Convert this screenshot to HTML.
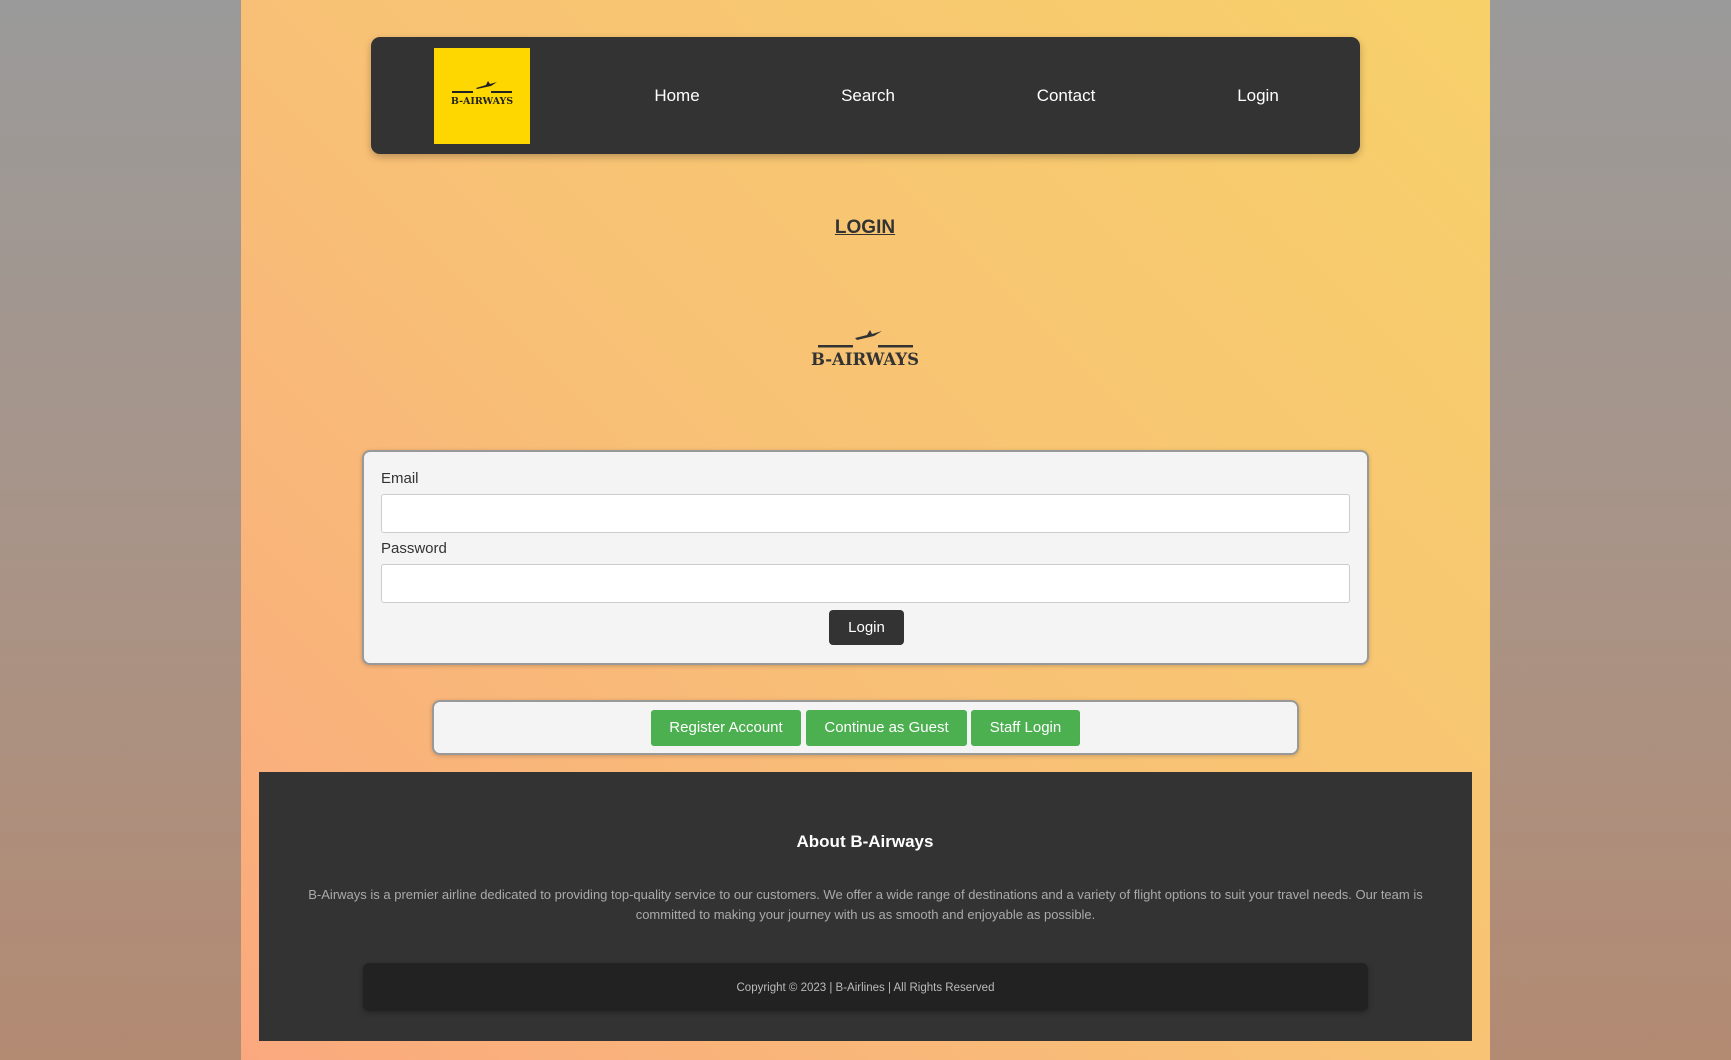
<!DOCTYPE html>
<html><head><meta charset="utf-8"><style>
*{box-sizing:border-box;margin:0;padding:0}
html,body{width:1731px;height:1060px;overflow:hidden;font-family:"Liberation Sans",Arial,sans-serif}
body{background:linear-gradient(180deg,#9a9a9a 0%,#a89488 50%,#b38a72 100%);position:relative}
.wrap{position:absolute;left:241px;top:0;width:1249px;height:1060px;background:linear-gradient(45deg,#faa97e 0%,#f8c275 50%,#f7d06a 100%)}
.abs{position:absolute}
.nav{left:130px;top:37px;width:989px;height:117px;background:#333;border-radius:9px;box-shadow:0 3px 8px rgba(0,0,0,.25)}
.logo{left:63px;top:11px;width:96px;height:96px;background:#ffd700}
.nav a{position:absolute;top:49px;color:#fff;font-size:17px;text-decoration:none;transform:translateX(-50%)}
.c{transform:translateX(-50%);white-space:nowrap}
.box{background:#f4f4f4;border:2px solid #999;border-radius:8px;box-shadow:0 1px 4px rgba(0,0,0,.2)}
label{position:absolute;font-size:15px;color:#333}
.inp{position:absolute;background:#fff;border:1px solid #ccc;border-radius:3px}
.g{position:absolute;top:8px;height:36px;background:#4caf50;color:#fff;font-size:15px;line-height:36px;text-align:center;border-radius:3px}
</style></head><body>
<div class="wrap">
 <div class="abs nav">
  <div class="abs logo">
   <svg width="96" height="96" viewBox="0 0 96 96">
    <path d="M42 40 l10 -3 l2 -4 l2 3 l7 -2 l-6 4 l-14 3z" fill="#222"/>
    <rect x="18" y="43" width="21" height="2" fill="#222"/><rect x="57" y="43" width="21" height="2" fill="#222"/>
    <text x="48" y="56" text-anchor="middle" font-family="DejaVu Serif,serif" font-weight="bold" font-size="9.5" fill="#222">B-AIRWAYS</text>
   </svg>
  </div>
  <a style="left:306px">Home</a><a style="left:497px">Search</a><a style="left:695px">Contact</a><a style="left:887px">Login</a>
 </div>
 <div class="abs c" style="left:624px;top:217px;font-size:19px;font-weight:bold;color:#333;text-decoration:underline">LOGIN</div>
 <div class="abs" style="left:564px;top:324px">
  <svg width="120" height="50" viewBox="0 0 120 50">
   <path d="M50 14 l12 -3 l3 -5 l2 4 l10 -3 l-8 5 l-17 4z" fill="#333"/>
   <rect x="13" y="21" width="35" height="2.5" fill="#333"/><rect x="73" y="21" width="35" height="2.5" fill="#333"/>
   <text x="60" y="41" text-anchor="middle" font-family="DejaVu Serif,serif" font-weight="bold" font-size="16.5" fill="#333">B-AIRWAYS</text>
  </svg>
 </div>
 <div class="abs box" style="left:121px;top:450px;width:1007px;height:215px">
  <label style="left:17px;top:18px">Email</label>
  <div class="inp" style="left:17px;top:42px;width:969px;height:39px"></div>
  <label style="left:17px;top:88px">Password</label>
  <div class="inp" style="left:17px;top:112px;width:969px;height:39px"></div>
  <div class="abs" style="left:465px;top:158px;width:75px;height:35px;background:#333;color:#fff;font-size:15px;line-height:35px;text-align:center;border-radius:4px">Login</div>
 </div>
 <div class="abs box" style="left:191px;top:700px;width:867px;height:55px">
  <div class="g" style="left:217px;width:150px">Register Account</div>
  <div class="g" style="left:372px;width:161px">Continue as Guest</div>
  <div class="g" style="left:537px;width:109px">Staff Login</div>
 </div>
 <div class="abs" style="left:18px;top:772px;width:1213px;height:269px;background:#333">
  <div class="abs c" style="left:606px;top:60px;color:#fff;font-weight:bold;font-size:17px">About B-Airways</div>
  <div class="abs" style="left:40px;top:113px;width:1133px;text-align:center;color:#aaa;font-size:13px;line-height:20px">B-Airways is a premier airline dedicated to providing top-quality service to our customers. We offer a wide range of destinations and a variety of flight options to suit your travel needs. Our team is committed to making your journey with us as smooth and enjoyable as possible.</div>
  <div class="abs" style="left:104px;top:191px;width:1005px;height:48px;background:#222;border-radius:6px;box-shadow:0 2px 6px rgba(0,0,0,.3);color:#bbb;font-size:11.5px;line-height:50px;text-align:center">Copyright © 2023 | B-Airlines | All Rights Reserved</div>
 </div>
</div>
</body></html>
